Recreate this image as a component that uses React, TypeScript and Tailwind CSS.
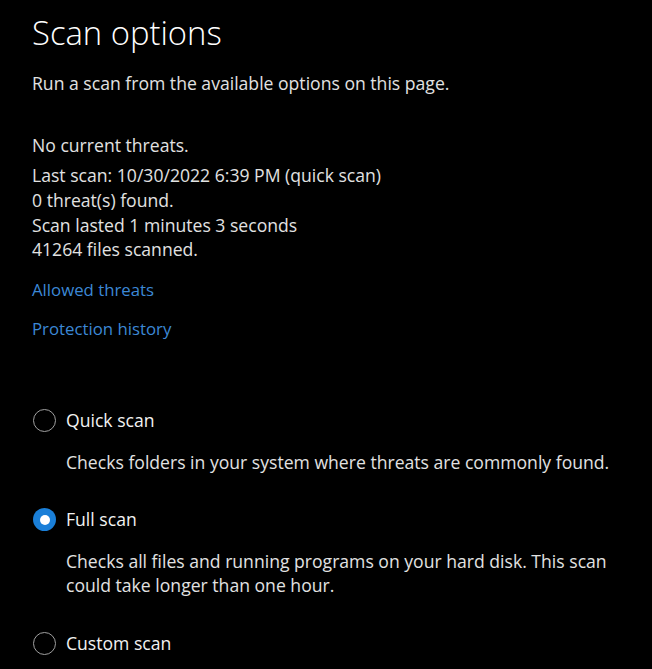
import React from "react";

function Radio({ checked }: { checked?: boolean }) {
  if (checked) {
    return (
      <span className="flex h-[23px] w-[23px] shrink-0 items-center justify-center rounded-full bg-[#1a7fd8]">
        <span className="h-[10px] w-[10px] rounded-full bg-white" />
      </span>
    );
  }
  return <span className="h-[23px] w-[23px] shrink-0 rounded-full border-[1.5px] border-[#a0a0a0]" />;
}

function Option({ label, checked, mt }: { label: string; checked?: boolean; mt: string }) {
  return (
    <div className={`flex h-[25px] items-center gap-[10px] pl-px ${mt}`}>
      <Radio checked={checked} />
      <span className="text-[#f2f2f2] leading-[25px]">{label}</span>
    </div>
  );
}

export default function App() {
  return (
    <div
      className="h-[669px] w-[652px] overflow-hidden bg-black pl-[32px] text-[17.6px] text-[#e2e2e2]"
      style={{ fontFamily: '"Open Sans", "Noto Sans", sans-serif' }}
    >
      <div className="flex flex-col">
        <h1 className="mt-[13px] text-[32.8px] font-light leading-[40px] text-white">Scan options</h1>
        <p className="mt-[18px] leading-[25px]">Run a scan from the available options on this page.</p>
        <p className="mt-[37px] leading-[25px]">No current threats.</p>
        <p className="mt-[5px] leading-[25px]">Last scan: 10/30/2022 6:39 PM (quick scan)</p>
        <p className="leading-[24.7px]">0 threat(s) found.</p>
        <p className="leading-[24.7px]">Scan lasted 1 minutes 3 seconds</p>
        <p className="leading-[24.7px]">41264 files scanned.</p>
        <a className="mt-[15px] w-fit text-[16.8px] leading-[25px] text-[#3c88d6]" href="#">Allowed threats</a>
        <a className="mt-[14px] w-fit text-[16.8px] leading-[25px] text-[#3c88d6]" href="#">Protection history</a>

        <Option label="Quick scan" mt="mt-[67px]" />
        <p className="mt-[17px] pl-[34px] leading-[25px]">Checks folders in your system where threats are commonly found.</p>

        <Option label="Full scan" checked mt="mt-[32px]" />
        <p className="mt-[17px] w-[594px] pl-[34px] leading-[24px]">
          Checks all files and running programs on your hard disk. This scan could take longer than one hour.
        </p>

        <Option label="Custom scan" mt="mt-[34px]" />
      </div>
    </div>
  );
}
